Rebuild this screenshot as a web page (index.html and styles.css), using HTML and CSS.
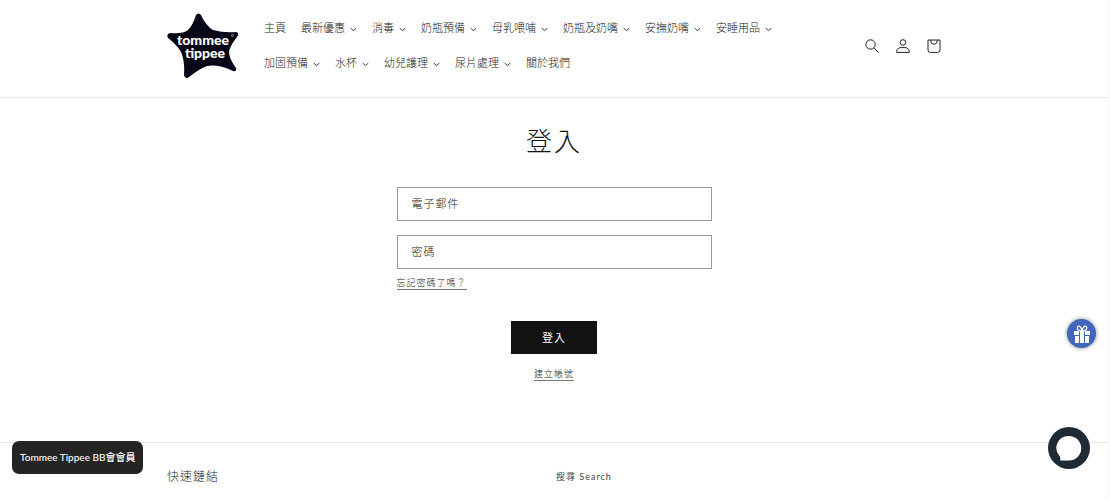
FILE: index.html
```html
<!DOCTYPE html>
<html lang="zh-Hant">
<head>
    <meta charset="UTF-8">
    <meta name="viewport" content="width=device-width, initial-scale=1">
    <title>登入</title>
    <link rel="stylesheet" href="styles.css">
</head>
<body>
    <svg class="symbols" aria-hidden="true">
        <symbol id="caret" viewBox="0 0 10 6">
            <path d="M1 1 L5 4.6 L9 1" fill="none" stroke="currentColor" stroke-width="1.3"/>
        </symbol>
    </svg>

    <header class="header">
        <div class="container header-inner">
            <a href="#" class="logo" aria-label="tommee tippee">
                <svg viewBox="0 0 71 66" width="71" height="66">
                    <path d="M29 2 Q31 -1 34 2 Q39 13 46 17 Q57 20 69 19 Q73 20 70 24 Q62 34 62 40 Q63 47 69 55 Q70 59 66 58 Q51 51 40 53 Q32 56 22 64 Q18 67 17 62 Q18 48 14 39 Q10 32 1 25 Q-1 21 3 20 Q16 21 21 17 Q26 12 29 2Z" fill="#050716"/>
                    <text x="36" y="32" class="logo-text">tommee</text>
                    <text x="38" y="45" class="logo-text">tippee</text>
                    <circle cx="65.500" cy="22.500" r="1" fill="none" stroke="#fff" stroke-width=".5"/>
                </svg>
            </a>
            <nav class="menu">
                <a href="#">主頁</a>
                <a href="#">最新優惠<svg class="caret"><use href="#caret"/></svg></a>
                <a href="#">消毒<svg class="caret"><use href="#caret"/></svg></a>
                <a href="#">奶瓶預備<svg class="caret"><use href="#caret"/></svg></a>
                <a href="#">母乳喂哺<svg class="caret"><use href="#caret"/></svg></a>
                <a href="#">奶瓶及奶嘴<svg class="caret"><use href="#caret"/></svg></a>
                <a href="#">安撫奶嘴<svg class="caret"><use href="#caret"/></svg></a>
                <a href="#">安睡用品<svg class="caret"><use href="#caret"/></svg></a>
                <a href="#">加固預備<svg class="caret"><use href="#caret"/></svg></a>
                <a href="#">水杯<svg class="caret"><use href="#caret"/></svg></a>
                <a href="#">幼兒護理<svg class="caret"><use href="#caret"/></svg></a>
                <a href="#">尿片處理<svg class="caret"><use href="#caret"/></svg></a>
                <a href="#">關於我們</a>
            </nav>
            <div class="actions">
                <a href="#" aria-label="搜尋">
                    <svg viewBox="0 0 14 14" width="14" height="14">
                        <circle cx="5.500" cy="5.500" r="4.700"/>
                        <path d="M9 9 L13.500 13.500"/>
                    </svg>
                </a>
                <a href="#" aria-label="登入">
                    <svg viewBox="0 0 14 14" width="14" height="14">
                        <circle cx="7" cy="3.500" r="2.800"/>
                        <path d="M.7 13.400 V12.500 C.7 9.800 3 8.600 5 8.600 H9 C11 8.600 13.300 9.800 13.300 12.500 V13.400 Z"/>
                    </svg>
                </a>
                <a href="#" aria-label="購物車">
                    <svg viewBox="0 0 14 14" width="14" height="14">
                        <path d="M1 1 H13 V11 Q13 13.400 10.600 13.400 H3.400 Q1 13.400 1 11 Z"/>
                        <path d="M3.800 1 V2 A3.200 3.200 0 0 0 10.200 2 V1"/>
                    </svg>
                </a>
            </div>
        </div>
    </header>

    <main class="login">
        <h1>登入</h1>
        <form>
            <div class="fields">
                <div class="field">
                    <input type="email" id="email" autocomplete="email">
                    <label for="email">電子郵件</label>
                </div>
                <div class="field">
                    <input type="password" id="password" autocomplete="current-password">
                    <label for="password">密碼</label>
                </div>
            </div>
            <a href="#" class="link">忘記密碼了嗎？</a>
            <div class="submit">
                <button type="submit">登入</button>
                <a href="#" class="link">建立帳號</a>
            </div>
        </form>
    </main>

    <footer class="footer">
        <div class="container footer-inner">
            <h2>快速鏈結</h2>
            <a href="#">搜尋 Search</a>
        </div>
    </footer>

    <button type="button" class="member">Tommee Tippee BB會會員</button>

    <button type="button" class="gift" aria-label="禮物">
        <svg viewBox="0 0 18 18" width="18" height="18">
            <path d="M1 6 H6 V10 H1Z M7 6 H11 V18 H7Z M12 6 H17 V10 H12Z M2 11 H6 V18 H2Z M12 11 H16 V18 H12Z" fill="#fff"/>
            <path d="M9 6 C5 6 3.500 4 4.500 2 C6 -.5 8.500 2.500 9 6 C9.500 2.500 12 -.5 13.500 2 C14.500 4 13 6 9 6Z" fill="none" stroke="#fff" stroke-width="1.200"/>
        </svg>
    </button>

    <button type="button" class="chat" aria-label="聊天">
        <svg viewBox="0 0 26 26" width="26" height="26">
            <path d="M13 1 A12 12 0 0 1 13 25.500 H4 Q5 23.500 3.500 21 A12 12 0 0 1 13 1Z" fill="#fff"/>
        </svg>
    </button>
</body>
</html>
```

FILE: styles.css
```css
*{
    box-sizing:border-box;
}
body{
    margin:0;
    border-right:2px solid #fafafa;
    background:#fff;
    color:#222;
    font-family:"Noto Sans CJK TC", sans-serif;
    font-weight:300;
    font-size:11px;
}
a{
    color:inherit;
    text-decoration:none;
}
button{
    border:0;
    font-family:inherit;
    cursor:pointer;
}
.symbols{
    display:none;
}
.container{
    max-width:840px;
    margin:0 auto;
    padding:0 33px;
}

/* header */
.header{
    border-bottom:1px solid #ececec;
}
.header-inner{
    display:flex;
    align-items:center;
    padding-top:10px;
    padding-bottom:17px;
}
.logo{
    padding-top:2px;
}
.logo svg{
    display:block;
}
.logo-text{
    fill:#fff;
    font-family:Lato, sans-serif;
    font-weight:900;
    font-size:14px;
    text-anchor:middle;
}
.menu{
    flex:1;
    display:flex;
    flex-wrap:wrap;
    column-gap:15px;
    margin:0 40px 0 26px;
}
.menu a{
    display:flex;
    align-items:center;
    line-height:35px;
}
.caret{
    width:7px;
    height:5px;
    margin:4px 0 0 5px;
}
.actions{
    display:flex;
    gap:17px;
    padding-top:2px;
}
.actions svg{
    display:block;
    fill:none;
    stroke:#222;
    stroke-width:1;
}

/* login form */
.login{
    max-width:315px;
    margin:0 auto;
    padding:21px 0 61px;
}
.login h1{
    margin:0 0 26px;
    color:#121212;
    font-size:26px;
    font-weight:300;
    line-height:42px;
    letter-spacing:2px;
    text-align:center;
}
.fields{
    display:grid;
    gap:14px;
    margin-bottom:4px;
}
.field{
    position:relative;
}
.field input{
    display:block;
    width:100%;
    height:34px;
    padding:0 15px;
    border:1px solid #999;
    border-radius:0;
    background:#fff;
    font:inherit;
}
.field label{
    position:absolute;
    top:0;
    left:15px;
    line-height:32px;
    letter-spacing:1px;
    pointer-events:none;
}
.link{
    display:inline-block;
    border-bottom:1px solid #777;
    font-size:9px;
    line-height:13px;
    letter-spacing:1px;
}
.submit{
    display:flex;
    flex-direction:column;
    align-items:center;
    gap:13px;
    margin-top:31px;
}
.submit button{
    padding:0 31px;
    background:#121212;
    color:#fff;
    font-size:11px;
    line-height:33px;
    letter-spacing:1px;
}

/* footer */
.footer{
    border-top:1px solid #e6e6e6;
}
.footer-inner{
    display:grid;
    grid-template-columns:1fr 1fr;
    align-items:center;
    column-gap:4px;
    padding-top:21px;
    padding-bottom:10px;
}
.footer h2{
    margin:0;
    font-size:12px;
    font-weight:300;
    line-height:24px;
    letter-spacing:1px;
}
.footer a{
    color:#444;
    font-family:Lato, "Noto Sans CJK TC", sans-serif;
    font-size:9px;
    font-weight:400;
    letter-spacing:1px;
}

/* floating buttons */
.member{
    position:fixed;
    left:12px;
    bottom:26px;
    padding:0 8px;
    border-radius:7px;
    background:#242424;
    color:#fff;
    font-family:Lato, "Noto Sans CJK TC", sans-serif;
    font-size:10px;
    font-weight:500;
    line-height:33px;
}
.gift,
.chat{
    position:fixed;
    display:flex;
    align-items:center;
    justify-content:center;
    padding:0;
    border-radius:50%;
}
.gift{
    right:14px;
    bottom:152px;
    width:29px;
    height:29px;
    background:#4267b8;
    box-shadow:0 0 4px #888;
}
.chat{
    right:20px;
    bottom:31px;
    width:42px;
    height:42px;
    background:#1f2a37;
}
```
